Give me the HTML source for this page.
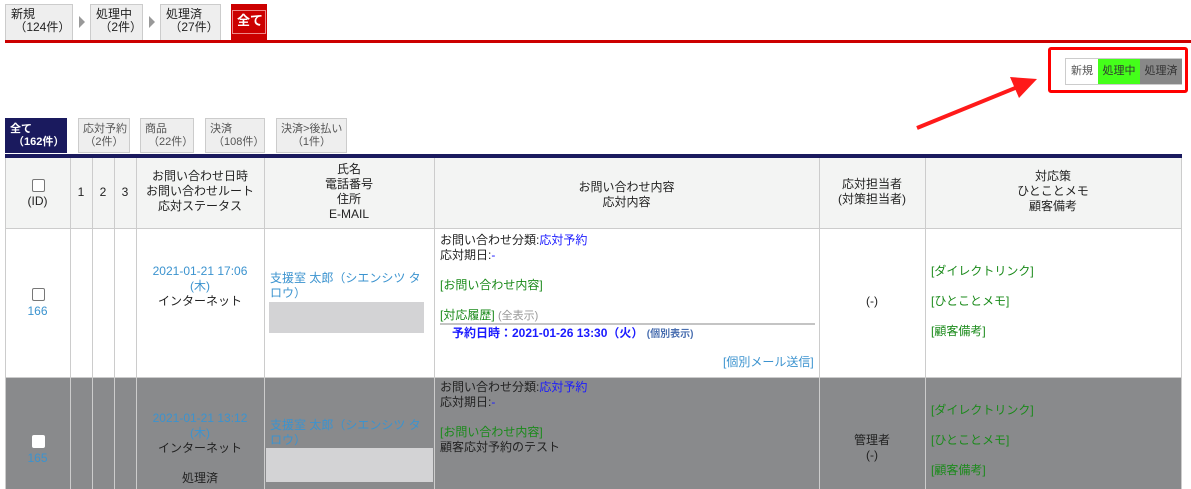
<!DOCTYPE html>
<html><head><meta charset="utf-8">
<style>
*{margin:0;padding:0;box-sizing:border-box}
body{width:1191px;height:489px;overflow:hidden;background:#fff;font-family:"Liberation Sans","Noto Sans CJK JP",sans-serif;font-size:12px;line-height:15px;color:#222;position:relative}
.a{position:absolute}
.tab{position:absolute;background:#eee;border:1px solid #ccc;border-bottom:none;padding:3px 5px;line-height:13px;color:#222;white-space:nowrap}
.tri{position:absolute;width:0;height:0;border-left:6px solid #999;border-top:6px solid transparent;border-bottom:6px solid transparent}
.st{position:absolute;background:#eee;border:1px solid #ccc;padding:4px 4px;line-height:13px;font-size:11px;color:#555;white-space:nowrap}
.vl{position:absolute;width:1px;background:#ccc}
.hl{position:absolute;height:1px;background:#ccc;left:5px;width:1177px}
.c{position:absolute;text-align:center}
.blue{color:#3b93cf}
.g{color:#1a8a1a}
.b{color:#1a1aff}
.chk{position:absolute;width:13px;height:13px;border:1px solid #777;border-radius:2px;background:#fff}
</style></head><body>
<div class="tab" style="left:5px;top:4px;width:68px;height:36px">新規<br>&nbsp;（124件）</div>
<div class="tri" style="left:79px;top:16px"></div>
<div class="tab" style="left:90px;top:4px;width:53px;height:36px">処理中<br>&nbsp;（2件）</div>
<div class="tri" style="left:149px;top:16px"></div>
<div class="tab" style="left:160px;top:4px;width:61px;height:36px">処理済<br>&nbsp;（27件）</div>
<div class="a" style="left:231px;top:4px;width:36px;height:38px;background:#cc0000"></div>
<div class="a" style="left:232px;top:10px;width:34px;height:24px;border:1px solid #e88;color:#fff;font-weight:bold;font-size:13px;line-height:20px;padding-left:4px">全て</div>
<div class="a" style="left:5px;top:40px;width:1186px;height:3px;background:#cc0000"></div>

<div class="a" style="left:1048px;top:47px;width:140px;height:46px;border:3px solid #ff0000;border-radius:3px"></div>
<div class="a" style="left:1065px;top:58px;width:117px;height:27px;border:1px solid #ccc;font-size:11px;line-height:25px">
<span class="a" style="left:0;width:32px;height:25px;background:#fff;color:#555;text-align:center">新規</span>
<span class="a" style="left:32px;width:42px;height:25px;background:#44ff1a;color:#333;text-align:center">処理中</span>
<span class="a" style="left:74px;width:42px;height:25px;background:#888;color:#333;text-align:center">処理済</span>
</div>
<svg class="a" style="left:910px;top:70px" width="140" height="65"><line x1="7" y1="58" x2="110" y2="16" stroke="#ff1a1a" stroke-width="4"/><polygon points="127,9 100,7 109,28" fill="#ff1a1a"/></svg>

<div class="st" style="left:5px;top:118px;width:62px;height:35px;background:#1a1a5e;border-color:#1a1a5e;color:#fff;font-weight:bold">全て<br>&nbsp;（162件）</div>
<div class="st" style="left:78px;top:118px;width:52px;height:35px;text-align:center">応対予約<br>（2件）</div>
<div class="st" style="left:140px;top:118px;width:54px;height:35px">商品<br>&nbsp;（22件）</div>
<div class="st" style="left:205px;top:118px;width:60px;height:35px">決済<br>&nbsp;（108件）</div>
<div class="st" style="left:276px;top:118px;width:71px;height:35px;text-align:center">決済&gt;後払い<br>（1件）</div>
<div class="a" style="left:5px;top:154px;width:1177px;height:4px;background:#1a1a5e"></div>

<div class="a" style="left:5px;top:158px;width:1177px;height:70px;background:#f3f4f3"></div>
<div class="a" style="left:5px;top:377px;width:1177px;height:112px;background:#898a8c"></div>
<div class="hl" style="top:228px"></div>
<div class="hl" style="top:377px"></div>
<div class="vl" style="left:5px;top:158px;height:331px"></div>
<div class="vl" style="left:70px;top:158px;height:331px"></div>
<div class="vl" style="left:92px;top:158px;height:331px"></div>
<div class="vl" style="left:114px;top:158px;height:331px"></div>
<div class="vl" style="left:136px;top:158px;height:331px"></div>
<div class="vl" style="left:264px;top:158px;height:331px"></div>
<div class="vl" style="left:434px;top:158px;height:331px"></div>
<div class="vl" style="left:819px;top:158px;height:331px"></div>
<div class="vl" style="left:925px;top:158px;height:331px"></div>
<div class="vl" style="left:1181px;top:158px;height:331px"></div>

<div class="chk" style="left:32px;top:179px"></div>
<div class="c" style="left:5px;width:65px;top:194px">(ID)</div>
<div class="c" style="left:70px;width:22px;top:185px">1</div>
<div class="c" style="left:92px;width:22px;top:185px">2</div>
<div class="c" style="left:114px;width:22px;top:185px">3</div>
<div class="c" style="left:136px;width:128px;top:169px">お問い合わせ日時<br>お問い合わせルート<br>応対ステータス</div>
<div class="c" style="left:264px;width:170px;top:162px">氏名<br>電話番号<br>住所<br>E-MAIL</div>
<div class="c" style="left:434px;width:385px;top:180px">お問い合わせ内容<br>応対内容</div>
<div class="c" style="left:819px;width:106px;top:177px">応対担当者<br>(対策担当者)</div>
<div class="c" style="left:925px;width:256px;top:169px">対応策<br>ひとことメモ<br>顧客備考</div>

<div class="chk" style="left:32px;top:288px"></div>
<div class="c blue" style="left:5px;width:65px;top:304px">166</div>
<div class="c" style="left:136px;width:128px;top:264px"><span class="blue">2021-01-21 17:06<br>(木)</span><br>インターネット</div>
<div class="a blue" style="left:270px;top:271px;width:162px">支援室 太郎（シエンシツ タロウ）</div>
<div class="a" style="left:269px;top:302px;width:155px;height:31px;background:#d3d3d5"></div>
<div class="a" style="left:440px;top:233px;width:375px">お問い合わせ分類:<span class="b">応対予約</span><br>応対期日:<span class="b">-</span><br><br><span class="g">[お問い合わせ内容]</span><br><br><span class="g">[対応履歴]</span> <span style="color:#999;font-size:11px">(全表示)</span></div>
<div class="a" style="left:440px;top:323px;width:375px;height:2px;background:#c4c4c4"></div>
<div class="a" style="left:452px;top:326px;color:#1a1aff;font-weight:bold">予約日時：2021-01-26 13:30（火） <span style="font-size:10px;color:#4a6fb0">(個別表示)</span></div>
<div class="a blue" style="left:723px;top:355px">[個別メール送信]</div>
<div class="c" style="left:819px;width:106px;top:294px">(-)</div>
<div class="a g" style="left:931px;top:256px;line-height:30px">[ダイレクトリンク]<br>[ひとことメモ]<br>[顧客備考]</div>

<div class="chk" style="left:32px;top:435px;border-color:#fff"></div>
<div class="c blue" style="left:5px;width:65px;top:451px">165</div>
<div class="c" style="left:136px;width:128px;top:411px"><span class="blue">2021-01-21 13:12<br>(木)</span><br>インターネット<br><br>処理済</div>
<div class="a blue" style="left:270px;top:418px;width:162px">支援室 太郎（シエンシツ タロウ）</div>
<div class="a" style="left:266px;top:448px;width:167px;height:34px;background:#d3d3d5"></div>
<div class="a" style="left:440px;top:380px;width:375px">お問い合わせ分類:<span class="b">応対予約</span><br>応対期日:<span class="b">-</span><br><br><span class="g">[お問い合わせ内容]</span><br>顧客応対予約のテスト</div>
<div class="c" style="left:819px;width:106px;top:433px">管理者<br>(-)</div>
<div class="a g" style="left:931px;top:395px;line-height:30px">[ダイレクトリンク]<br>[ひとことメモ]<br>[顧客備考]</div>
</body></html>
